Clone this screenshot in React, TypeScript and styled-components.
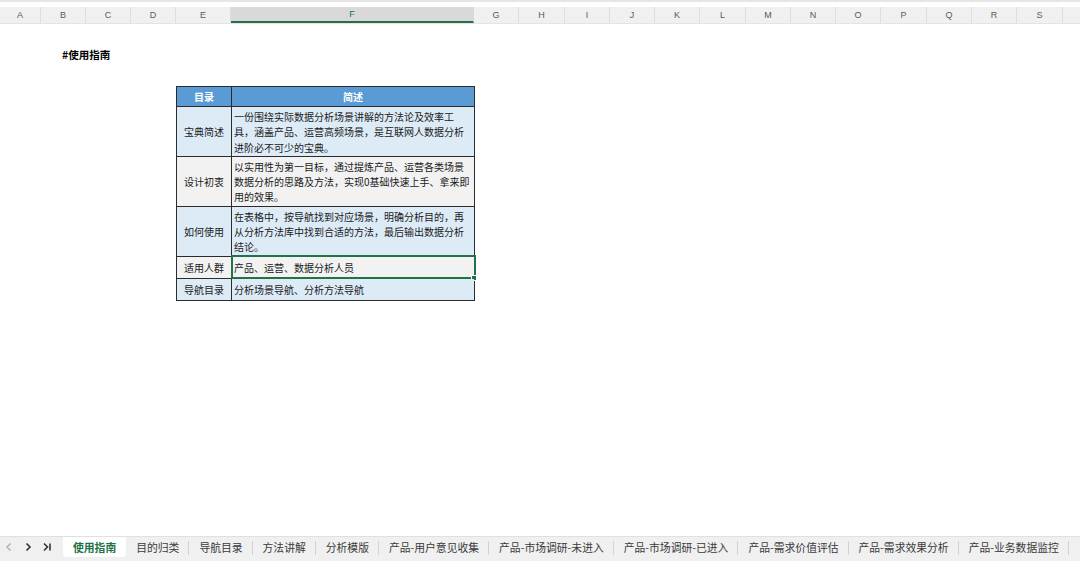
import styled, { createGlobalStyle } from 'styled-components';

const GlobalStyle = createGlobalStyle`
  html, body {
    margin: 0;
    padding: 0;
    background: #ffffff;
  }
  body {
    font-family: 'Noto Sans CJK SC', 'Noto Sans', sans-serif;
  }
`;

const columns: { name: string; width: number }[] = [
  { name: 'A', width: 41 },
  { name: 'B', width: 45 },
  { name: 'C', width: 45 },
  { name: 'D', width: 45 },
  { name: 'E', width: 55 },
  { name: 'F', width: 243 },
  { name: 'G', width: 45 },
  { name: 'H', width: 46 },
  { name: 'I', width: 45 },
  { name: 'J', width: 45 },
  { name: 'K', width: 45 },
  { name: 'L', width: 46 },
  { name: 'M', width: 45 },
  { name: 'N', width: 45 },
  { name: 'O', width: 45 },
  { name: 'P', width: 46 },
  { name: 'Q', width: 45 },
  { name: 'R', width: 45 },
  { name: 'S', width: 46 },
  { name: '', width: 46 },
];

const rows: { label: string; lines: string[]; tone: 'blue' | 'gray'; selected?: boolean }[] = [
  {
    label: '宝典简述',
    lines: ['一份围绕实际数据分析场景讲解的方法论及效率工', '具，涵盖产品、运营高频场景，是互联网人数据分析', '进阶必不可少的宝典。'],
    tone: 'blue',
  },
  {
    label: '设计初衷',
    lines: ['以实用性为第一目标，通过提炼产品、运营各类场景', '数据分析的思路及方法，实现0基础快速上手、拿来即', '用的效果。'],
    tone: 'gray',
  },
  {
    label: '如何使用',
    lines: ['在表格中，按导航找到对应场景，明确分析目的，再', '从分析方法库中找到合适的方法，最后输出数据分析', '结论。'],
    tone: 'blue',
  },
  { label: '适用人群', lines: ['产品、运营、数据分析人员'], tone: 'gray', selected: true },
  { label: '导航目录', lines: ['分析场景导航、分析方法导航'], tone: 'blue' },
];

const tabs = [
  '使用指南',
  '目的归类',
  '导航目录',
  '方法讲解',
  '分析模版',
  '产品-用户意见收集',
  '产品-市场调研-未进入',
  '产品-市场调研-已进入',
  '产品-需求价值评估',
  '产品-需求效果分析',
  '产品-业务数据监控',
];

const Page = styled.div`
  display: flex;
  flex-direction: column;
  width: 100vw;
  height: 100vh;
  overflow: hidden;
`;

const TopStrip = styled.div`
  height: 7px;
  flex-shrink: 0;
  box-sizing: border-box;
  border-top: 2px solid #e6e6e6;
  background: #ffffff;
`;

const HeaderRow = styled.div`
  display: flex;
  height: 16px;
  flex-shrink: 0;
  background: #f0f0f0;
  border-bottom: 1px solid #e4e4e4;
`;

const ColHead = styled.div<{ $w: number; $active?: boolean }>`
  width: ${(p) => p.$w}px;
  flex-shrink: 0;
  box-sizing: border-box;
  display: flex;
  align-items: center;
  justify-content: center;
  font-family: 'Liberation Sans', Arial, sans-serif;
  font-size: 9px;
  color: ${(p) => (p.$active ? '#217346' : '#5a5a5a')};
  background: ${(p) => (p.$active ? '#d9d9d9' : 'transparent')};
  border-right: 1px solid ${(p) => (p.$active ? '#d9d9d9' : '#dedede')};
  border-bottom: ${(p) => (p.$active ? '2px solid #217346' : 'none')};
`;

const Sheet = styled.div`
  flex: 1;
  background: #ffffff;
  padding: 24px 0 0 62px;
`;

const Title = styled.div`
  font-size: 10.5px;
  font-weight: 700;
  color: #000000;
  line-height: 14px;
`;

const Table = styled.table`
  margin: 24px 0 0 114px;
  border-collapse: collapse;
  table-layout: fixed;
  width: 298px;
  font-size: 10px;
  color: #1a1a1a;
`;

const Col = styled.col<{ $w: number }>`
  width: ${(p) => p.$w}px;
`;

const HeadCell = styled.th`
  height: 19px;
  padding: 0;
  background: #5b9bd5;
  color: #ffffff;
  font-weight: 700;
  font-size: 10px;
  text-align: center;
  border: 1px solid #2b2b2b;
`;

const LabelCell = styled.td<{ $tone: 'blue' | 'gray' }>`
  padding: 0;
  text-align: center;
  vertical-align: middle;
  white-space: nowrap;
  line-height: 15px;
  height: 21px;
  background: ${(p) => (p.$tone === 'blue' ? '#ddebf7' : '#f2f2f2')};
  border: 1px solid #2b2b2b;
`;

const TextCell = styled.td<{ $tone: 'blue' | 'gray'; $selected?: boolean }>`
  position: relative;
  padding: 2px 0 1px 2px;
  vertical-align: middle;
  white-space: nowrap;
  overflow: visible;
  line-height: 15.3px;
  background: ${(p) => (p.$tone === 'blue' ? '#ddebf7' : '#f2f2f2')};
  border: 1px solid #2b2b2b;
  ${(p) =>
    p.$selected &&
    `
    outline: 2px solid #217346;
    outline-offset: -1px;
    &::after {
      content: '';
      position: absolute;
      right: -3px;
      bottom: -3px;
      width: 4px;
      height: 4px;
      background: #217346;
      border: 1px solid #ffffff;
    }
  `}
`;

const TabBar = styled.div`
  height: 24px;
  flex-shrink: 0;
  display: flex;
  align-items: flex-start;
  background: #f0f0f0;
  border-top: 1px solid #e0e0e0;
  white-space: nowrap;
  overflow: hidden;
`;

const NavGroup = styled.div`
  display: flex;
  align-items: center;
  gap: 11px;
  height: 20px;
  padding: 0 12px 0 5px;
`;

const NavArrow = styled.span<{ $dim?: boolean }>`
  color: ${(p) => (p.$dim ? '#b5b5b5' : '#333333')};
  display: flex;
  align-items: center;
`;

const Tab = styled.div<{ $active?: boolean; $sep?: boolean }>`
  flex-shrink: 0;
  height: 20px;
  display: flex;
  align-items: center;
  padding: 0 10px;
  font-size: 10.8px;
  color: ${(p) => (p.$active ? '#217346' : '#3a3a3a')};
  font-weight: ${(p) => (p.$active ? 700 : 400)};
  background: ${(p) => (p.$active ? '#ffffff' : 'transparent')};
  border-radius: ${(p) => (p.$active ? '0 0 4px 4px' : '0')};
  position: relative;
  ${(p) =>
    p.$sep &&
    `
    &::after {
      content: '';
      position: absolute;
      right: 0;
      top: 4px;
      height: 14px;
      width: 1px;
      background: #d2d2d2;
    }
  `}
`;

const Chevron = ({ dir }: { dir: 'left' | 'right' | 'end' }) => (
  <svg width="8" height="10" viewBox="0 0 8 10" fill="none" stroke="currentColor" strokeWidth="1.6">
    {dir === 'left' && <path d="M5.5 1.5 L2 5 L5.5 8.5" />}
    {dir === 'right' && <path d="M2.5 1.5 L6 5 L2.5 8.5" />}
    {dir === 'end' && (
      <>
        <path d="M1 1.5 L4.5 5 L1 8.5" />
        <path d="M7 1.5 L7 8.5" />
      </>
    )}
  </svg>
);

const App = () => {
  return (
    <>
      <GlobalStyle />
      <Page>
        <TopStrip />
        <HeaderRow>
          {columns.map((c, i) => (
            <ColHead key={i} $w={c.width} $active={c.name === 'F'}>
              {c.name}
            </ColHead>
          ))}
        </HeaderRow>
        <Sheet>
          <Title>#使用指南</Title>
          <Table>
            <colgroup>
              <Col $w={55} />
              <Col $w={243} />
            </colgroup>
            <thead>
              <tr>
                <HeadCell>目录</HeadCell>
                <HeadCell>简述</HeadCell>
              </tr>
            </thead>
            <tbody>
              {rows.map((r) => (
                <tr key={r.label}>
                  <LabelCell $tone={r.tone}>{r.label}</LabelCell>
                  <TextCell $tone={r.tone} $selected={r.selected}>
                    {r.lines.map((l, i) => (
                      <div key={i}>{l}</div>
                    ))}
                  </TextCell>
                </tr>
              ))}
            </tbody>
          </Table>
        </Sheet>
        <TabBar>
          <NavGroup>
            <NavArrow $dim>
              <Chevron dir="left" />
            </NavArrow>
            <NavArrow>
              <Chevron dir="right" />
            </NavArrow>
            <NavArrow>
              <Chevron dir="end" />
            </NavArrow>
          </NavGroup>
          {tabs.map((t, i) => (
            <Tab key={t} $active={i === 0} $sep={i > 0}>
              {t}
            </Tab>
          ))}
        </TabBar>
      </Page>
    </>
  );
};

export default App;
